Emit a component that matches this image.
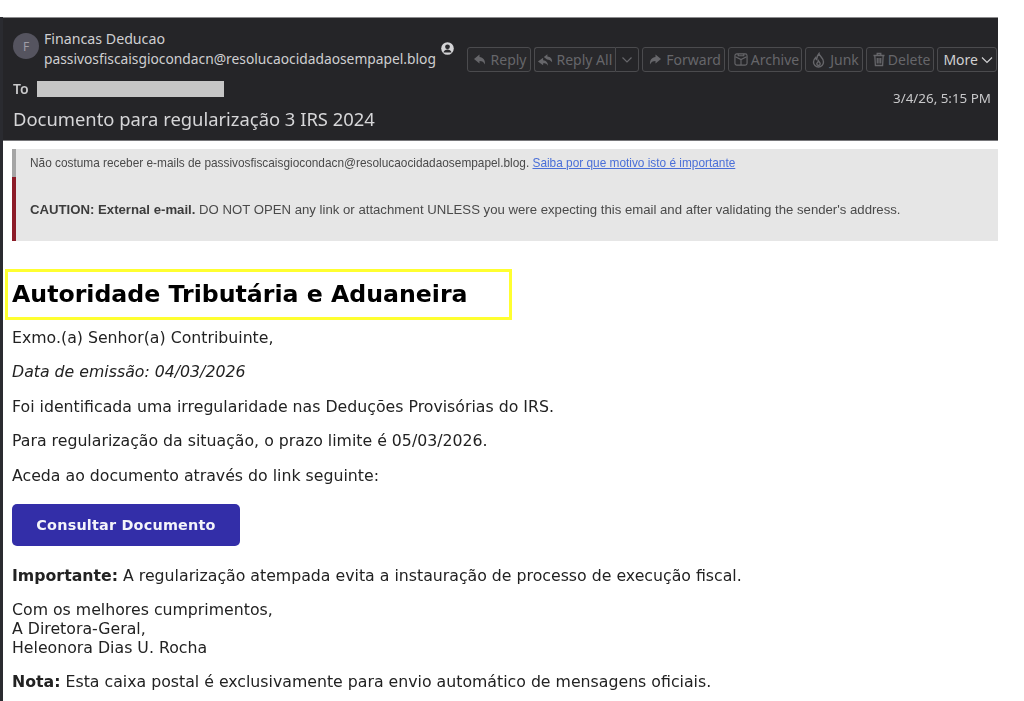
<style>
:global(body) { margin: 0; background: #fff; }
.page { width: 1024px; height: 701px; overflow: hidden; padding: 17px 26px 0 0; box-sizing: border-box; filter: blur(0.45px); }
.win { width: 998px; height: 684px; border-left: 3px solid #2a2b30; box-sizing: border-box; overflow: hidden; }
.head { height: 124px; margin-left: -3px; background: #252528; border-top: 1px solid #8c8c8e; border-bottom: 1px solid #77777a; box-sizing: border-box; color: #d4d4d6; font-family: "Noto Sans", sans-serif; display: flex; flex-direction: column; padding: 0 7px 0 13px; }
.top { display: flex; align-items: flex-start; height: 57px; padding-top: 12px; box-sizing: border-box; }
.avatar { width: 26px; height: 26px; border-radius: 50%; background: #55545f; color: #9e9da6; font-size: 12px; display: flex; align-items: center; justify-content: center; margin-top: 3px; margin-right: 5px; flex: none; }
.sender { font-size: 13.8px; line-height: 20px; white-space: nowrap; color: #cfcfd1; }
.name { font-size: 14.2px; margin-top: -1px; }
.contact { margin: 12px 0 0 5px; flex: none; }
.tools { margin-left: auto; display: flex; gap: 3px; margin-top: 17px; margin-right: -6px; }
.btn { height: 25px; box-sizing: border-box; border: 1px solid #4b4b4e; border-radius: 3px; display: flex; align-items: center; gap: 4px; padding: 0 3px 0 5px; font-size: 14px; color: #66666a; white-space: nowrap; background: #28282b; }
.btn svg { flex: none; }
.btn.more { color: #d0d0d2; padding: 0 2px 0 5px; gap: 2px; }
.split { border-right: 0; border-radius: 3px 0 0 3px; padding-left: 2px; gap: 3px; }
.caret { border-radius: 0 3px 3px 0; padding: 0 4px; margin-left: -3px; background: #252528; }
.tight { gap: 2px; }
.archive { gap: 3px; padding-right: 2px; }
.row { display: flex; align-items: center; height: 27px; }
.to { font-size: 14px; font-weight: 600; color: #c9c9cb; width: 24px; }
.redact { width: 187px; height: 16px; background: #c6c6c6; }
.date { margin-left: auto; font-size: 13.4px; color: #c8c8ca; margin-top: 18px; }
.subject { font-size: 18.4px; line-height: 24px; color: #d6d6d8; margin-top: 5px; }

.notices { margin: 8px 0 0 9px; background: #e6e6e6; font-family: "Liberation Sans", sans-serif; color: #4a4a4a; }
.n1 { height: 28px; border-left: 4px solid #a5a5a5; padding-left: 14px; display: flex; align-items: center; box-sizing: border-box; white-space: pre; font-size: 11.85px; }
.n1 a { color: #4a6fd8; text-decoration: underline; }
.n2 { height: 64px; border-left: 4px solid #8c1c28; padding-left: 14px; display: flex; align-items: center; box-sizing: border-box; white-space: pre; font-size: 13.18px; }
.n2 b { color: #3c3c3c; }

.mail { font-family: "DejaVu Sans", sans-serif; color: #222; font-size: 15.75px; padding-left: 9px; }
.titlebox { margin: 28px 0 0 -7px; width: 507px; height: 51px; border: 3px solid #ffff30; box-sizing: border-box; display: flex; align-items: center; padding: 0 0 2px 4px; }
h1 { margin: 0; font-size: 23.65px; font-weight: 700; color: #000; white-space: nowrap; }
p { margin: 0; line-height: 17px; white-space: nowrap; }
.body { display: flex; flex-direction: column; padding-top: 9px; gap: 17.4px; }
.cta { display: flex; align-items: center; justify-content: center; width: 228px; height: 42px; background: #332ea8; border-radius: 5px; color: #f4f4fa; font-weight: 700; font-size: 14.4px; margin: 3px 0 4px; letter-spacing: .2px; }
.sign { line-height: 19px; margin-top: -2px; }
.note { margin-top: -1px; }
</style>

<div class="page">
  <div class="win">
    <div class="head">
      <div class="top">
        <div class="avatar">F</div>
        <div class="sender">
          <div class="name">Financas Deducao</div>
          <div>passivosfiscaisgiocondacn@resolucaocidadaosempapel.blog</div>
        </div>
        <svg class="contact" width="13" height="13" viewBox="0 0 13 13">
          <circle cx="6.5" cy="6.5" r="6.300" fill="#d4d4d6"/>
          <circle cx="6.5" cy="4.8" r="2.4" fill="#2a2a2d"/>
          <path d="M2.400 10.600c.6-2.200 2.300-3.100 4.100-3.100s3.500.9 4.100 3.100" fill="#2a2a2d"/>
        </svg>
        <div class="tools">
          <div class="btn">
            <svg width="14" height="13" viewBox="0 0 14 13"><path d="M6.500 1.500 1 6l5.500 4.500V8c2.800 0 4.300 1 5.500 3.500.4-4.300-1.800-7-5.500-7.500z" fill="#66666a"/></svg>
            Reply
          </div>
          <div class="btn split">
            <svg width="17" height="14" viewBox="0 0 18 14"><path d="M6.500 4.500 1 8.500l5.500 4V10.500c2.700 0 4 .5 5 2.500.3-3.400-1.900-5.300-5-5.800z" fill="#66666a"/><path d="M11 .8 7.200 3.700l3.400 2.700c2.300.3 4 1.100 5.400 3.100.3-3.700-1.700-5.700-5-6.100z" fill="#66666a"/></svg>
            Reply All
          </div>
          <div class="btn caret">
            <svg width="14" height="12" viewBox="0 0 14 12"><path d="M2.500 3.500 7 8l4.500-4.500" fill="none" stroke="#66666a" stroke-width="1.200"/></svg>
          </div>
          <div class="btn">
            <svg width="14" height="13" viewBox="0 0 14 13"><path d="M7.500 1.500 13 6l-5.500 4.500V8C4.700 8 3.200 9 2 11.500 1.600 7.200 3.800 4.500 7.500 4z" fill="#66666a"/></svg>
            Forward
          </div>
          <div class="btn archive">
            <svg width="14" height="15" viewBox="0 0 15 15" fill="none" stroke="#66666a" stroke-width="1.200"><rect x="1" y="1.500" width="13" height="12" rx="2"/><path d="M1.500 4.500 7.500 7.500l6-3M7.500 7.500v6M4.500 1.500v2h6v-2"/></svg>
            Archive
          </div>
          <div class="btn">
            <svg width="15" height="16" viewBox="0 0 15 16" fill="none" stroke="#66666a" stroke-width="1.400"><path d="M8 1.500c.3 2.600 4.500 4 4.500 8.500a5 5 0 0 1-10 0c0-1.800.8-3.200 2-4.300.2 1 .6 1.600 1.300 2C5.600 5.300 6.700 3 8 1.500z"/><path d="M7.500 9c.3 1 1.700 1.500 1.700 2.800a1.700 1.700 0 0 1-3.400 0c0-1 1.200-1.800 1.700-2.800z"/></svg>
            Junk
          </div>
          <div class="btn tight">
            <svg width="14" height="15" viewBox="0 0 14 15" fill="none" stroke="#66666a" stroke-width="1.300"><path d="M1.500 3.500h11M5.200 3.500V1.500h3.600v2M2.800 3.500l.6 10h7.200l.6-10M5.300 6v5.500M7 6v5.500M8.700 6v5.500"/></svg>
            Delete
          </div>
          <div class="btn more">
            More
            <svg width="14" height="12" viewBox="0 0 14 12"><path d="M2 3.500 7 8.500l5-5" fill="none" stroke="#d0d0d2" stroke-width="1.200"/></svg>
          </div>
        </div>
      </div>
      <div class="row">
        <div class="to">To</div>
        <div class="redact"></div>
        <div class="date">3/4/26, 5:15 PM</div>
      </div>
      <div class="subject">Documento para regularização 3 IRS 2024</div>
    </div>

    <div class="notices">
      <div class="n1">Não costuma receber e-mails de passivosfiscaisgiocondacn@resolucaocidadaosempapel.blog. <a href="#top">Saiba por que motivo isto é importante</a></div>
      <div class="n2"><b>CAUTION: External e-mail.</b> DO NOT OPEN any link or attachment UNLESS you were expecting this email and after validating the sender's address.</div>
    </div>

    <div class="mail">
      <div class="titlebox"><h1>Autoridade Tributária e Aduaneira</h1></div>
      <div class="body">
        <p>Exmo.(a) Senhor(a) Contribuinte,</p>
        <p><em>Data de emissão: 04/03/2026</em></p>
        <p>Foi identificada uma irregularidade nas Deduções Provisórias do IRS.</p>
        <p>Para regularização da situação, o prazo limite é 05/03/2026.</p>
        <p>Aceda ao documento através do link seguinte:</p>
        <div class="cta">Consultar Documento</div>
        <p><b>Importante:</b> A regularização atempada evita a instauração de processo de execução fiscal.</p>
        <p class="sign">Com os melhores cumprimentos,<br/>A Diretora-Geral,<br/>Heleonora Dias U. Rocha</p>
        <p class="note"><b>Nota:</b> Esta caixa postal é exclusivamente para envio automático de mensagens oficiais.</p>
      </div>
    </div>
  </div>
</div>
